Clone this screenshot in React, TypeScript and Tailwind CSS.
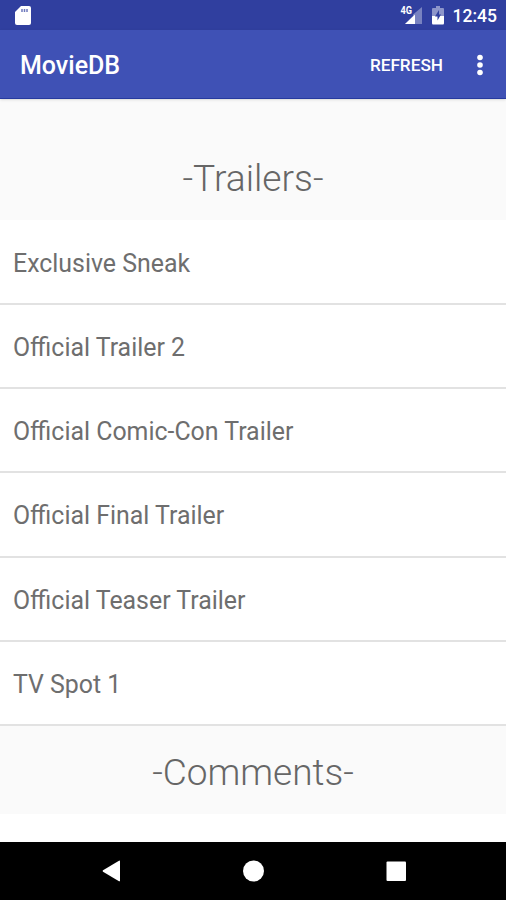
const trailers = [
    "Exclusive Sneak",
    "Official Trailer 2",
    "Official Comic-Con Trailer",
    "Official Final Trailer",
    "Official Teaser Trailer",
    "TV Spot 1",
];

export default function App() {
    return (
        <div className="flex h-[900px] w-[506px] flex-col overflow-hidden bg-white font-[Roboto,sans-serif]">
            <StatusBar />
            <AppBar />
            <main className="flex flex-1 flex-col">
                <h2 className="flex h-[121px] items-end justify-center bg-[#fafafa] pb-[19px] text-[37.2px] leading-[46px] font-light text-[#666]">
                    -Trailers-
                </h2>
                <ul className="pt-[0.6px]">
                    {trailers.map((name) => (
                        <li key={name} className="flex h-[84.3px] items-center border-b-2 border-[#e2e2e2] pt-[3px] pl-[13px] text-[24.9px] text-[#6e6e6e]">
                            {name}
                        </li>
                    ))}
                </ul>
                <h2 className="flex h-[88px] items-center justify-center bg-[#fafafa] pt-1 text-[37px] font-light text-[#666]">
                    -Comments-
                </h2>
            </main>
            <NavBar />
        </div>
    );
}

function StatusBar() {
    return (
        <div className="flex h-[30px] shrink-0 items-center bg-[#303f9f] pr-[9px] pl-[15px] text-white">
            {/* SD card */}
            <svg className="h-[20px] w-[16px]" viewBox="0 0 16 20" fill="currentColor">
                <path d="M6 1h8q2 0 2 2v15q0 2-2 2H2q-2 0-2-2V7z" />
                <path d="M7 4v3M9.500 4v3M12 4v3" stroke="#303f9f" strokeWidth="1.5" strokeOpacity="0.7" />
            </svg>
            {/* Mobile signal */}
            <svg className="ml-auto h-[20px] w-[23px] overflow-visible" viewBox="0 0 23 20" fill="currentColor">
                <path d="M22 2v17H5l8-8V9.500z" fillOpacity="0.35" />
                <path d="M15 9.500V19H5z" />
                <text x="0.5" y="8.5" fontSize="10.5" fontWeight="700" textLength="11.5" lengthAdjust="spacingAndGlyphs">
                    4G
                </text>
            </svg>
            {/* Charging battery */}
            <svg className="ml-[9px] h-[20px] w-[12px]" viewBox="0 0 12 20" fill="currentColor">
                <path d="M4 1h4v2h3q1 0 1 1v7H0V4q0-1 1-1h3z" fillOpacity="0.45" />
                <path d="M0 11h12v7q0 1.5-1 1.5H1q-1 0-1-1.5z" />
                <path d="M7 5 3 11.500h2.500V15.500L9 9.500H7z" fill="#303f9f" />
            </svg>
            <span className="mt-[3px] ml-[9px] text-[17.5px] font-medium">12:45</span>
        </div>
    );
}

function AppBar() {
    return (
        <header className="z-10 flex h-[69px] shrink-0 items-center border-b border-[#263a9f] bg-[#3f51b5] pr-[23px] pl-5 text-white shadow">
            <h1 className="mt-[3px] text-[25px] font-medium">MovieDB</h1>
            <button className="mt-[3px] ml-auto text-[17.2px] font-medium">REFRESH</button>
            <svg className="mt-px ml-[34px] h-[22px] w-[6px]" viewBox="0 0 6 22" fill="currentColor">
                <circle cx="3" cy="3.5" r="2.8" />
                <circle cx="3" cy="11" r="2.8" />
                <circle cx="3" cy="18.5" r="2.8" />
            </svg>
        </header>
    );
}

function NavBar() {
    return (
        <nav className="flex h-[58px] shrink-0 items-center bg-black pl-[101px] text-white">
            <svg className="h-[22px] w-[305px]" viewBox="0 0 305 22" fill="currentColor">
                <path d="M2 10.200 18 .7q1-.3 1 .5v19.500q0 .8-1 .5L2 11.800q-.8-.8 0-1.600z" />
                <circle cx="152.500" cy="11" r="10.500" />
                <rect x="285.500" y="1.500" width="19.500" height="19.500" rx="1" />
            </svg>
        </nav>
    );
}
